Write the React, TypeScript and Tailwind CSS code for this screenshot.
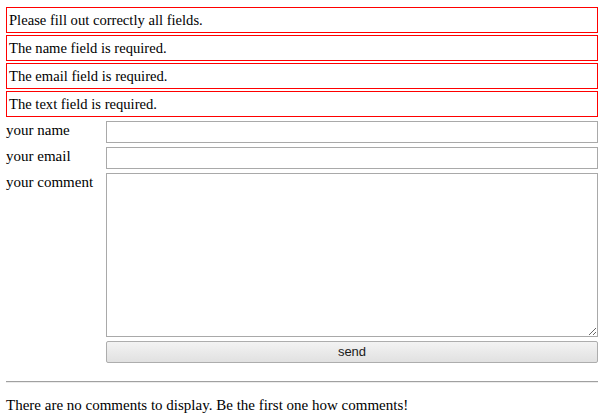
const errors = [
  "Please fill out correctly all fields.",
  "The name field is required.",
  "The email field is required.",
  "The text field is required.",
];

export default function App() {
  return (
    <div className="w-[603px] h-[416px] bg-white text-black text-[15px] leading-[18px] font-['Liberation_Serif','Times_New_Roman',serif] pt-[7px] pl-[6px]">
      <div className="w-[592px] flex flex-col gap-[2px]">
        {errors.map((msg) => (
          <div key={msg} className="h-[26px] border border-[#ff0000] pl-[2px] flex items-center text-[14.6px]">
            {msg}
          </div>
        ))}
      </div>

      <form className="w-[592px] mt-[4px] flex flex-col gap-[4px]" onSubmit={(e) => e.preventDefault()}>
        <div className="flex">
          <label className="w-[100px] shrink-0">your name</label>
          <input type="text" className="flex-1 h-[22px] border border-[#a9a9a9] bg-white outline-none" />
        </div>
        <div className="flex">
          <label className="w-[100px] shrink-0">your email</label>
          <input type="text" className="flex-1 h-[22px] border border-[#a9a9a9] bg-white outline-none" />
        </div>
        <div className="flex">
          <label className="w-[100px] shrink-0">your comment</label>
          <textarea className="flex-1 h-[164px] border border-[#a9a9a9] bg-white outline-none resize" />
        </div>
        <div className="flex">
          <div className="w-[100px] shrink-0" />
          <button
            type="submit"
            className="flex-1 h-[22px] border border-[#adadad] rounded-[2px] bg-gradient-to-b from-[#f3f3f3] to-[#e1e1e1] text-[13px] leading-[20px] text-[#1a1a1a] font-['Liberation_Sans',sans-serif]"
          >
            send
          </button>
        </div>
      </form>

      <div className="w-[592px] mt-[18px] border-t border-[#a0a0a0] border-b border-b-[#ececec]" />

      <p className="mt-[13px]">There are no comments to display. Be the first one how comments!</p>
    </div>
  );
}
